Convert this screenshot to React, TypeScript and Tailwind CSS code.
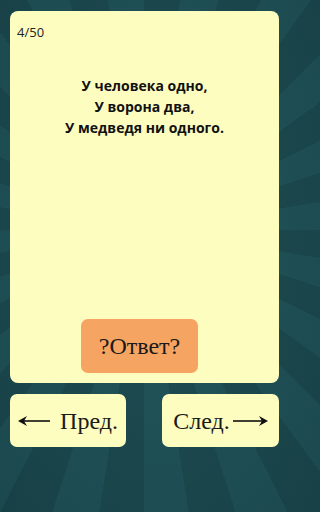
import React from "react";

function ArrowLeft() {
  return (
    <svg width="32" height="12" viewBox="0 0 32 12" className="shrink-0">
      <line x1="4" y1="6" x2="32" y2="6" stroke="#111" strokeWidth="1.6" />
      <path d="M0 6 L9 1 L6 6 L9 11 Z" fill="#111" />
    </svg>
  );
}

function ArrowRight() {
  return (
    <svg width="35" height="12" viewBox="0 0 35 12" className="shrink-0">
      <line x1="0" y1="6" x2="31" y2="6" stroke="#111" strokeWidth="1.6" />
      <path d="M35 6 L26 1 L29 6 L26 11 Z" fill="#111" />
    </svg>
  );
}

export default function App() {
  return (
    <div className="w-full min-h-screen overflow-hidden bg-[#1d4c52] bg-[image:radial-gradient(ellipse_at_50%_45%,rgba(40,95,98,0.2),rgba(10,40,44,0.3)),repeating-conic-gradient(from_0deg_at_144px_230px,#1d4b51_0deg_9deg,#22565c_9deg_18deg)]">
      <div className="w-[288px] h-[512px] pt-[11px] pl-[10px]">
        {/* Card */}
        <div className="w-[269px] h-[372px] rounded-[8px] bg-[#fdfdc0] flex flex-col">
          <div className="pl-[7px] pt-[12px] text-[13px] leading-[18px] text-[#222] font-['Open_Sans',sans-serif]">
            4/50
          </div>
          <div className="mt-[34px] text-center text-[14px] leading-[21px] font-bold text-[#111] font-['Open_Sans',sans-serif]">
            <div>У человека одно,</div>
            <div>У ворона два,</div>
            <div>У медведя ни одного.</div>
          </div>
          <div className="flex-1" />
          <button className="self-start ml-[71px] mb-[10px] w-[117px] h-[54px] rounded-[7px] bg-[#f6a461] text-[24px] text-[#1a1a1a] font-['Liberation_Serif',serif] flex items-center justify-center">
            ?Ответ?
          </button>
        </div>

        {/* Nav buttons */}
        <div className="mt-[11px] flex gap-[36px]">
          <button className="w-[116px] h-[53px] rounded-[7px] bg-[#fdfdc0] flex items-center justify-center gap-[10px] text-[24px] text-[#1a1a1a] font-['Liberation_Serif',serif]">
            <ArrowLeft />
            <span>Пред.</span>
          </button>
          <button className="w-[117px] h-[53px] rounded-[7px] bg-[#fdfdc0] flex items-center justify-center gap-[3px] text-[24px] text-[#1a1a1a] font-['Liberation_Serif',serif]">
            <span>След.</span>
            <ArrowRight />
          </button>
        </div>
      </div>
    </div>
  );
}
